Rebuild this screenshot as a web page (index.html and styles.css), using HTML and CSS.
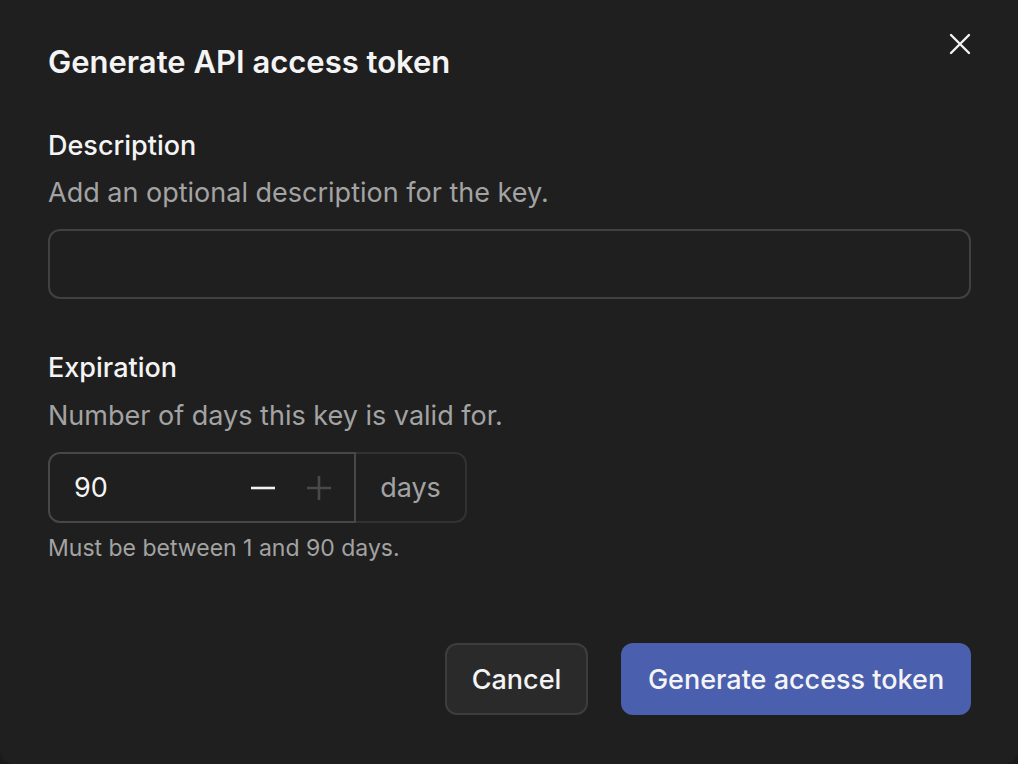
FILE: index.html
```html
<!DOCTYPE html>
<html lang="en">
<head>
<meta charset="utf-8">
<title>Generate API access token</title>
<link rel="stylesheet" href="styles.css">
</head>
<body>
<div class="dialog">
  <div class="header">
    <h1 class="title">Generate API access token</h1>
    <button class="close" aria-label="Close">
      <svg width="24" height="24" viewBox="0 0 24 24" fill="none" stroke="#f2f2f2" stroke-width="2.4" stroke-linecap="round"><path d="M3 3L21 21M21 3L3 21"/></svg>
    </button>
  </div>

  <div class="field field-desc">
    <div class="label">Description</div>
    <div class="hint">Add an optional description for the key.</div>
    <div class="text-input"></div>
  </div>

  <div class="field field-exp">
    <div class="label">Expiration</div>
    <div class="hint">Number of days this key is valid for.</div>
    <div class="number-group">
      <div class="number-input">
        <span class="value">90</span>
        <span class="step minus"><svg width="26" height="26" viewBox="0 0 26 26" stroke="#f2f2f2" stroke-width="2.6"><path d="M1 13H25"/></svg></span>
        <span class="step plus"><svg width="26" height="26" viewBox="0 0 26 26" stroke="#4a4a4a" stroke-width="2.6"><path d="M1 13H25M13 1V25"/></svg></span>
      </div>
      <div class="addon">days</div>
    </div>
    <div class="help">Must be between 1 and 90 days.</div>
  </div>

  <div class="actions">
    <button class="btn btn-secondary">Cancel</button>
    <button class="btn btn-primary">Generate access token</button>
  </div>
</div>
</body>
</html>
```

FILE: styles.css
```css
html, body {
  margin: 0;
  padding: 0;
  background: #1a1a1a;
}
body {
  font-family: Inter, "Noto Sans", sans-serif;
  color: #f2f2f2;
  width: 1018px;
  height: 764px;
  overflow: hidden;
}
.dialog {
  box-sizing: border-box;
  width: 1018px;
  height: 764px;
  background: #1f1f1f;
  border-radius: 0 0 14px 14px;
  padding: 40px 47px 0 48px;
  display: flex;
  flex-direction: column;
}
.header {
  display: flex;
  justify-content: space-between;
  align-items: flex-start;
}
.title {
  margin: 0;
  font-size: 31px;
  line-height: 44px;
  font-weight: 600;
  color: #f4f4f4;
}
.close {
  background: none;
  border: 0;
  padding: 0;
  margin: -8px -1px 0 0;
  width: 24px;
  height: 24px;
  display: flex;
  cursor: pointer;
}
.field {
  display: flex;
  flex-direction: column;
}
.field-desc { margin-top: 44px; }
.field-exp { margin-top: 51px; }
.label {
  font-size: 27px;
  line-height: 36px;
  font-weight: 500;
  color: #f4f4f4;
}
.hint {
  margin-top: 11px;
  font-size: 27px;
  line-height: 36px;
  color: #a3a3a3;
}
.field-exp .hint { margin-top: 12px; }
.text-input {
  margin-top: 18px;
  box-sizing: border-box;
  height: 70px;
  border: 2px solid #414141;
  border-radius: 12px;
}
.number-group {
  margin-top: 18px;
  display: flex;
  height: 71px;
}
.number-input {
  box-sizing: border-box;
  width: 308px;
  border: 2px solid #474747;
  border-radius: 12px 0 0 12px;
  display: flex;
  align-items: center;
  padding: 0 22px 0 24px;
}
.value {
  flex: 1;
  font-size: 27px;
  color: #f4f4f4;
}
.step {
  display: flex;
  width: 26px;
  height: 26px;
}
.plus { margin-left: 30px; }
.addon {
  box-sizing: border-box;
  width: 111px;
  border: 2px solid #323232;
  border-left: 0;
  border-radius: 0 12px 12px 0;
  display: flex;
  align-items: center;
  justify-content: center;
  font-size: 27px;
  color: #a3a3a3;
}
.help {
  margin-top: 11px;
  font-size: 23px;
  line-height: 28px;
  color: #a3a3a3;
}
.actions {
  margin-top: 81px;
  display: flex;
  justify-content: flex-end;
  gap: 33px;
}
.btn {
  height: 72px;
  border-radius: 12px;
  font-family: Inter, "Noto Sans", sans-serif;
  font-size: 27px;
  font-weight: 500;
  color: #f4f4f4;
  cursor: pointer;
}
.btn-secondary {
  width: 143px;
  background: #2a2a2a;
  border: 2px solid #3d3d3d;
}
.btn-primary {
  width: 350px;
  background: #4a5fae;
  border: 0;
}
```
